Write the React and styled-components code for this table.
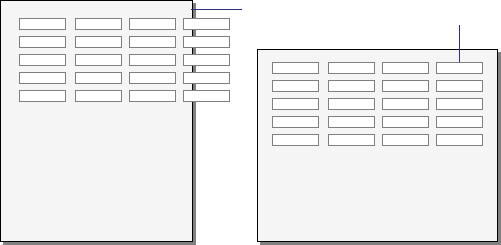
import React from "react";
import styled, { createGlobalStyle } from "styled-components";

const GlobalStyle = createGlobalStyle`
    *, *::before, *::after {
        box-sizing: border-box;
    }
    html, body {
        margin: 0;
        padding: 0;
        background: #ffffff;
        font-family: "Liberation Sans", Arial, sans-serif;
    }
`;

const Canvas = styled.div`
    position: relative;
    display: flex;
    align-items: flex-start;
    width: 501px;
    height: 245px;
    overflow: hidden;
`;

const Page = styled.div`
    flex: none;
    width: ${(props) => props.$w}px;
    height: ${(props) => props.$h}px;
    margin-left: ${(props) => props.$left || 0}px;
    margin-top: ${(props) => props.$top || 0}px;
    padding: ${(props) => props.$padTop}px 0 0 ${(props) => props.$padLeft}px;
    background: #f5f5f5;
    border: 1px solid #000000;
    box-shadow: 3px 3px 0 #808080;
    display: flex;
    flex-direction: column;
    gap: 6px;
`;

const Row = styled.div`
    display: flex;
    gap: 7px;
    position: relative;
    z-index: 1;
`;

const Cell = styled.div`
    flex: none;
    width: 47px;
    height: 12px;
    margin-right: ${(props) => (props.$lead ? 2 : 0)}px;
    background: #ffffff;
    border: 1px solid #7f7f7f;
`;

const Leader = styled.div`
    position: absolute;
    z-index: 2;
    background: #2f2f7f;
    left: ${(props) => props.$x}px;
    top: ${(props) => props.$y}px;
    width: ${(props) => props.$w}px;
    height: ${(props) => props.$h}px;
`;

const rows = [0, 1, 2, 3, 4];
const cols = [0, 1, 2, 3];

const Table = () => (
    <>
        {rows.map((r) => (
            <Row key={r}>
                {cols.map((c) => (
                    <Cell key={c} $lead={c === 0} />
                ))}
            </Row>
        ))}
    </>
);

const App = () => {
    return (
        <>
            <GlobalStyle />
            <Canvas>
                <Page $w={193} $h={242} $padTop={17} $padLeft={18}>
                    <Table />
                </Page>
                <Page
                    $w={241}
                    $h={193}
                    $left={64}
                    $top={49}
                    $padTop={12}
                    $padLeft={14}
                >
                    <Table />
                </Page>
                <Leader $x={191} $y={9} $w={51} $h={1} />
                <Leader $x={459} $y={25} $w={1} $h={37} />
            </Canvas>
        </>
    );
};

export default App;
